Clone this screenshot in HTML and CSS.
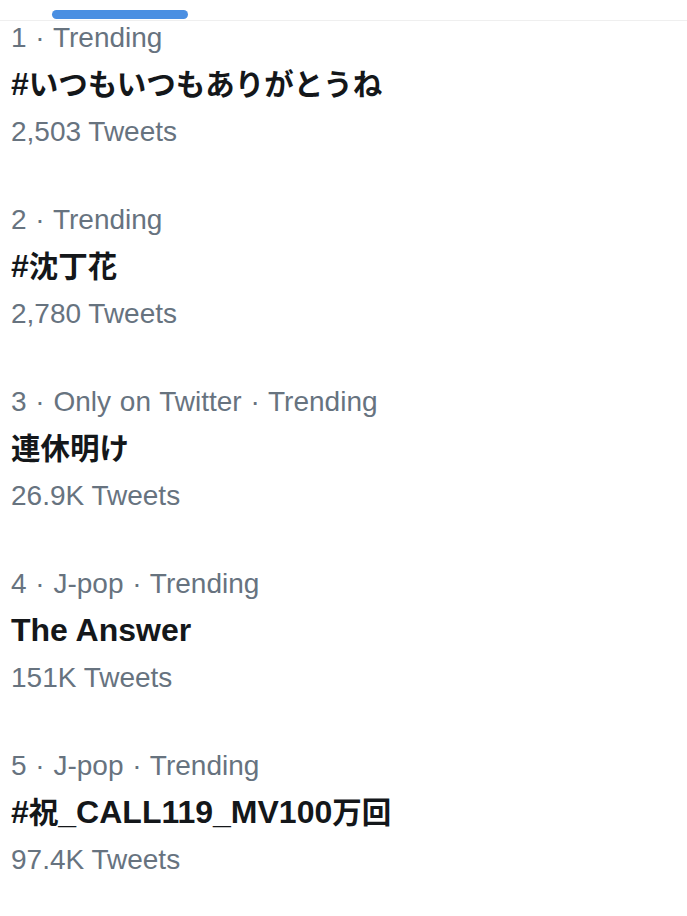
FILE: index.html
```html
<!DOCTYPE html>
<html lang="ja">
<head>
<meta charset="utf-8">
<title>Trends</title>
<link rel="stylesheet" href="styles.css">
</head>
<body>
<div class="tabbar"><div class="indicator"></div></div>
<ul class="trends">
  <li class="trend">
    <div class="meta">1 · Trending</div>
    <div class="title">#<span class="cjk">いつもいつもありがとうね</span></div>
    <div class="count">2,503 Tweets</div>
  </li>
  <li class="trend">
    <div class="meta">2 · Trending</div>
    <div class="title">#<span class="cjk">沈丁花</span></div>
    <div class="count">2,780 Tweets</div>
  </li>
  <li class="trend">
    <div class="meta">3 · Only on Twitter · Trending</div>
    <div class="title"><span class="cjk">連休明け</span></div>
    <div class="count">26.9K Tweets</div>
  </li>
  <li class="trend">
    <div class="meta">4 · J-pop · Trending</div>
    <div class="title">The Answer</div>
    <div class="count">151K Tweets</div>
  </li>
  <li class="trend">
    <div class="meta">5 · J-pop · Trending</div>
    <div class="title">#<span class="cjk">祝</span>_CALL119_MV100<span class="cjk">万回</span></div>
    <div class="count">97.4K Tweets</div>
  </li>
</ul>
</body>
</html>
```
FILE: styles.css
```css
html, body {
  margin: 0;
  padding: 0;
  background: #ffffff;
}
body {
  font-family: "Liberation Sans", Arial, "Noto Sans CJK JP", sans-serif;
  color: #14171a;
}
.tabbar {
  height: 20px;
  border-bottom: 1px solid #efefef;
  display: flex;
  align-items: flex-start;
}
.indicator {
  margin-top: 10px;
  margin-left: 52px;
  width: 136px;
  height: 9px;
  border-radius: 5px;
  background: #4a8fe2;
}
.trends {
  list-style: none;
  margin: 0;
  padding: 0 0 0 11px;
}
.trend {
  display: flex;
  flex-direction: column;
  padding-bottom: 48px;
}
.meta {
  font-size: 28px;
  line-height: 34px;
  height: 34px;
  padding-bottom: 6px;
  color: #67737f;
  white-space: nowrap;
  word-spacing: 1px;
}
.title {
  font-size: 32px;
  font-weight: bold;
  line-height: 46px;
  height: 46px;
  margin-bottom: 2px;
  color: #14171a;
  white-space: nowrap;
}
.cjk {
  font-family: "Noto Sans CJK JP", "Liberation Sans", sans-serif;
  font-size: 29.5px;
  line-height: 1;
}
.count {
  font-size: 28px;
  line-height: 46px;
  height: 46px;
  color: #67737f;
  white-space: nowrap;
}
```
